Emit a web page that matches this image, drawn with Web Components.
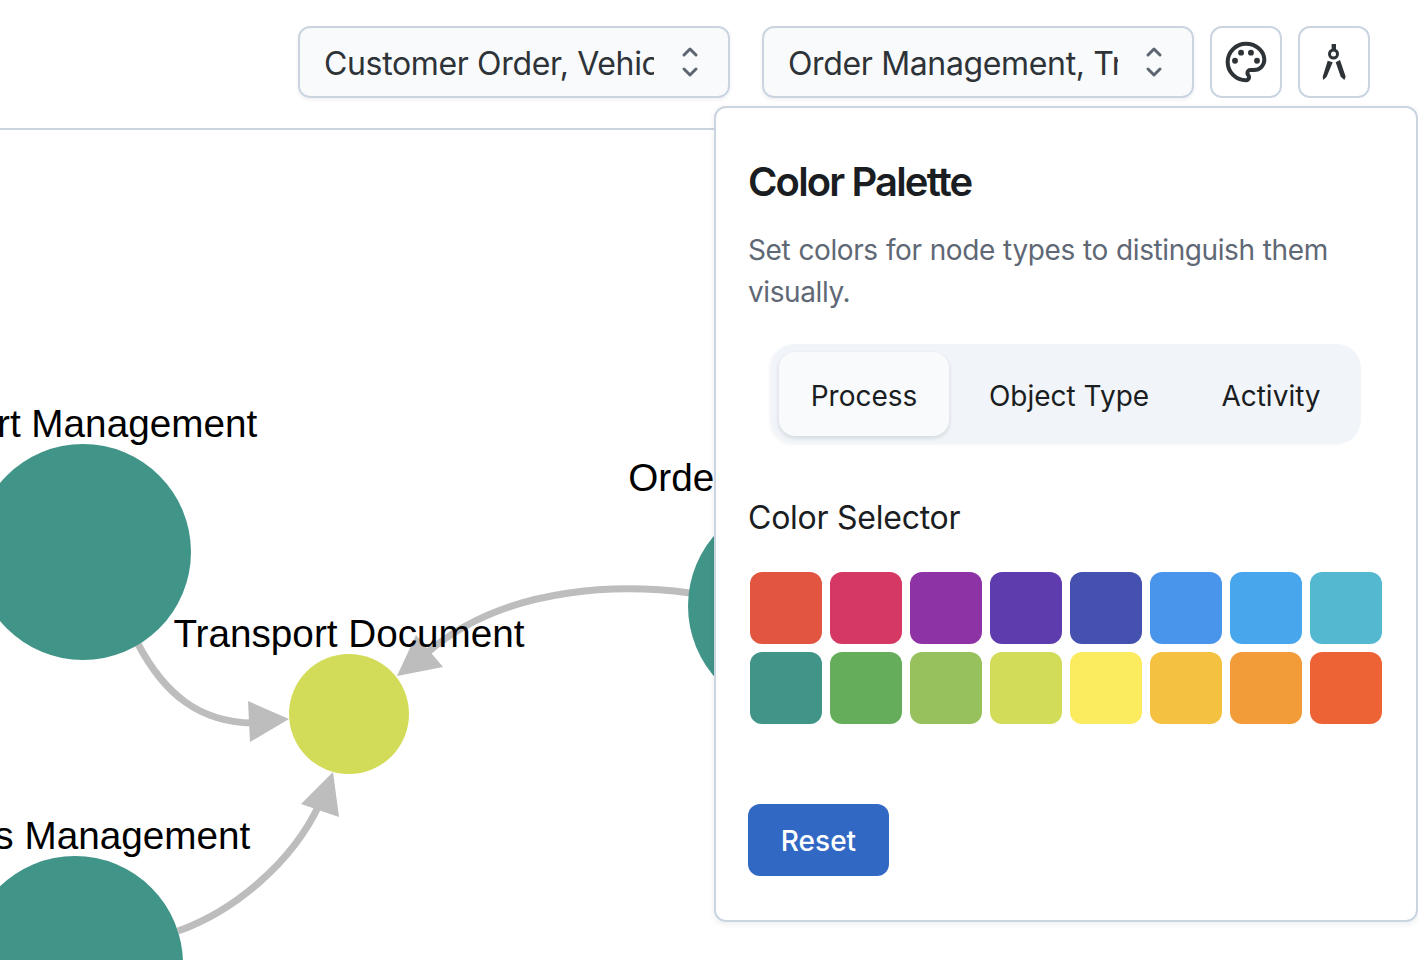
<!DOCTYPE html>
<html lang="en">
<head>
<meta charset="utf-8">
<title>Process map</title>
<style>
  html, body { margin: 0; height: 100%; background: #fff; overflow: hidden; }
  body { font-family: Inter, "Liberation Sans", sans-serif; display: flex; flex-direction: column; position: relative; }
</style>
</head>
<body>
  <app-toolbar>
    <app-select style="margin-right: 16px">Customer Order, Vehicle</app-select>
    <app-select>Order Management, Transport</app-select>
    <icon-button icon="palette" size="44" label="Color palette"></icon-button>
    <icon-button icon="compass" size="48" label="Layout"></icon-button>
  </app-toolbar>
  <graph-canvas></graph-canvas>
  <palette-panel></palette-panel>

<script>
const INK = "#2e3338";

class AppToolbar extends HTMLElement {
  constructor() {
    super();
    this.attachShadow({ mode: "open" });
  }

  connectedCallback() {
    this.shadowRoot.innerHTML = `
      <style>
        :host {
          display: flex;
          justify-content: flex-end;
          align-items: center;
          gap: 16px;
          box-sizing: border-box;
          height: 130px;
          padding: 0 48px 4px 0;
          border-bottom: 2px solid #cbd5e1;
          flex: none;
        }
      </style>
      <slot></slot>
    `;
  }
}

class AppSelect extends HTMLElement {
  constructor() {
    super();
    this.attachShadow({ mode: "open" });
  }

  connectedCallback() {
    this.shadowRoot.innerHTML = `
      <style>
        :host {
          display: flex;
          align-items: center;
          box-sizing: border-box;
          width: 432px;
          height: 72px;
          padding: 0 24px;
          background: #f8fafc;
          border: 2px solid #cbd5e1;
          border-radius: 12px;
          box-shadow: 0 2px 4px rgba(15, 23, 42, 0.06);
          color: ${INK};
          font-size: 32px;
          letter-spacing: -0.35px;
          flex: none;
        }
        .value { flex: 1; min-width: 0; overflow: hidden; white-space: nowrap; padding-top: 2px; }
        svg { flex: none; width: 32px; height: 32px; margin: 0 -2px 0 20px; }
      </style>
      <span class="value"><slot></slot></span>
      <svg viewBox="0 0 32 32" fill="none" stroke="#5d6570" stroke-width="3" stroke-linecap="round" stroke-linejoin="round">
        <path d="M10 9l6-6 6 6"/>
        <path d="M10 23l6 6 6-6"/>
      </svg>
    `;
  }
}

const ICONS = {
  palette: `
    <path fill="none" stroke="currentColor" stroke-width="2.2" stroke-linejoin="round" d="M12 2C6.5 2 2 6.5 2 12s4.5 10 10 10c.926 0 1.648-.746 1.648-1.688 0-.437-.18-.835-.437-1.125-.29-.289-.438-.652-.438-1.125a1.64 1.64 0 0 1 1.668-1.668h1.996c3.051 0 5.555-2.503 5.555-5.554C21.965 6.012 17.461 2 12 2z"/>
    <g fill="currentColor">
      <circle cx="6" cy="11.3" r="1.6"/>
      <circle cx="9.3" cy="6.9" r="1.6"/>
      <circle cx="14.7" cy="6.9" r="1.6"/>
      <circle cx="18" cy="11.3" r="1.6"/>
    </g>`,
  compass: `
    <path fill="currentColor" d="M10.8 3h2.2v3h-2.2z"/>
    <circle cx="11.75" cy="8" r="2" fill="none" stroke="currentColor" stroke-width="1.5"/>
    <path fill="currentColor" d="M8.85 11.35L11.35 12.15 8.35 19.35 6.65 21 6.35 19.35zM12.85 12.15L15 11 17.85 19.35 17.15 21 15.35 19.35z"/>`,
};

class IconButton extends HTMLElement {
  constructor() {
    super();
    this.attachShadow({ mode: "open" });
  }

  connectedCallback() {
    const size = this.getAttribute("size");
    this.shadowRoot.innerHTML = `
      <style>
        :host {
          display: flex;
          align-items: center;
          justify-content: center;
          box-sizing: border-box;
          width: 72px;
          height: 72px;
          background: #fff;
          border: 2px solid #cbd5e1;
          border-radius: 12px;
          color: ${INK};
          flex: none;
        }
        svg { width: ${size}px; height: ${size}px; }
      </style>
      <svg viewBox="0 0 24 24" role="img" aria-label="${this.getAttribute("label")}">${ICONS[this.getAttribute("icon")]}</svg>
    `;
  }
}

const NODES = [
  { x: 83, y: 552, r: 108, fill: "#419488", label: "Export Management", ly: 437 },
  { x: 75, y: 964, r: 108, fill: "#419488", label: "Goods Management", ly: 849 },
  { x: 796, y: 606, r: 108, fill: "#419488", label: "Order Management", ly: 491 },
  { x: 349, y: 714, r: 60, fill: "#d2dc58", label: "Transport Document", ly: 647 },
];

const EDGES = [
  { d: "M138 644C165 695 200 722 252 723", head: "289,719 248,701 250,742" },
  { d: "M178 931C232 912 292 864 320 803", head: "333,772 301,804 339,817" },
  { d: "M690 593C630 585 510 582 428 652", head: "397,676 443,667 416,635" },
];

class GraphCanvas extends HTMLElement {
  constructor() {
    super();
    this.attachShadow({ mode: "open" });
  }

  connectedCallback() {
    const edges = EDGES.map(
      (e) => `
        <path d="${e.d}" fill="none" stroke="#bdbdbd" stroke-width="7"/>
        <polygon points="${e.head}" fill="#bdbdbd"/>`
    ).join("");
    const nodes = NODES.map((n) => `<circle cx="${n.x}" cy="${n.y}" r="${n.r}" fill="${n.fill}"/>`).join("");
    const labels = NODES.map((n) => `<text x="${n.x}" y="${n.ly}" text-anchor="middle">${n.label}</text>`).join("");

    this.shadowRoot.innerHTML = `
      <style>
        :host { display: block; flex: 1; min-height: 0; position: relative; overflow: hidden; }
        svg { position: absolute; left: 0; top: -130px; }
        text { font-family: "Liberation Sans", Arial, sans-serif; font-size: 38.7px; fill: #000; }
      </style>
      <svg width="1418" height="960" viewBox="0 0 1418 960">${edges}${nodes}${labels}</svg>
    `;
  }
}

const PALETTE = [
  "#e15541", "#d63864", "#8e33a6", "#5f3cad", "#4551ae", "#4a95ec", "#48a6ec", "#55b8d1",
  "#419488", "#66ad5b", "#97c15c", "#d2dc58", "#fbeb5e", "#f4c240", "#f19c38", "#ed6335",
];

class TabSwitch extends HTMLElement {
  constructor() {
    super();
    this.attachShadow({ mode: "open" });
  }

  connectedCallback() {
    this.shadowRoot.innerHTML = `
      <style>
        :host {
          display: flex;
          align-items: stretch;
          box-sizing: border-box;
          height: 100px;
          padding: 8px;
          margin-left: 23px;
          width: 590px;
          background: #f1f5f9;
          border-radius: 24px;
          box-shadow: -2px 1px 3px rgba(15, 23, 42, 0.04);
          color: #1a1d21;
          font-size: 28px;
        }
        span { display: flex; align-items: center; justify-content: center; padding-top: 3px; box-sizing: border-box; }
        .active {
          width: 170px;
          background: #f8fafc;
          border-radius: 16px;
          box-shadow: 0 2px 4px rgba(15, 23, 42, 0.14);
        }
        .object { width: 240px; }
        .activity { width: 164px; }
      </style>
      <span class="active">Process</span>
      <span class="object">Object Type</span>
      <span class="activity">Activity</span>
    `;
  }
}

class ColorSwatches extends HTMLElement {
  constructor() {
    super();
    this.attachShadow({ mode: "open" });
  }

  connectedCallback() {
    this.shadowRoot.innerHTML = `
      <style>
        :host {
          display: grid;
          grid-template-columns: repeat(8, 72px);
          grid-auto-rows: 72px;
          gap: 8px;
          margin-left: 2px;
        }
        div { border-radius: 12px; }
      </style>
      ${PALETTE.map((c) => `<div style="background:${c}"></div>`).join("")}
    `;
  }
}

class PalettePanel extends HTMLElement {
  constructor() {
    super();
    this.attachShadow({ mode: "open" });
  }

  connectedCallback() {
    this.shadowRoot.innerHTML = `
      <style>
        :host {
          position: absolute;
          top: 106px;
          left: 714px;
          box-sizing: border-box;
          width: 704px;
          height: 816px;
          padding: 32px;
          background: #fff;
          border: 2px solid #cbd5e1;
          border-radius: 12px;
          box-shadow: 0 2px 6px rgba(15, 23, 42, 0.08);
          display: block;
        }
        h2 {
          margin: 18px 0 0;
          font-size: 40px;
          line-height: 48px;
          font-weight: 600;
          letter-spacing: -1.85px;
          color: #1a1d21;
        }
        p {
          margin: 23px 0 0;
          font-size: 28px;
          line-height: 42px;
          letter-spacing: -0.4px;
          word-spacing: 0.7px;
          color: #5f6875;
        }
        tab-switch { margin-top: 31px; }
        h3 {
          margin: 51px 0 0;
          font-size: 32px;
          line-height: 46px;
          font-weight: 400;
          letter-spacing: -0.25px;
          color: #1a1d21;
        }
        color-swatches { margin-top: 31px; }
        button {
          display: block;
          margin-top: 80px;
          width: 141px;
          height: 72px;
          padding: 2px 0 0;
          border: 0;
          border-radius: 12px;
          background: #3068c4;
          color: #fff;
          font: 500 28px Inter, "Liberation Sans", sans-serif;
        }
      </style>
      <h2>Color Palette</h2>
      <p>Set colors for node types to distinguish them visually.</p>
      <tab-switch></tab-switch>
      <h3>Color Selector</h3>
      <color-swatches></color-swatches>
      <button type="button">Reset</button>
    `;
  }
}

customElements.define("app-toolbar", AppToolbar);
customElements.define("app-select", AppSelect);
customElements.define("icon-button", IconButton);
customElements.define("graph-canvas", GraphCanvas);
customElements.define("tab-switch", TabSwitch);
customElements.define("color-swatches", ColorSwatches);
customElements.define("palette-panel", PalettePanel);
</script>
</body>
</html>
